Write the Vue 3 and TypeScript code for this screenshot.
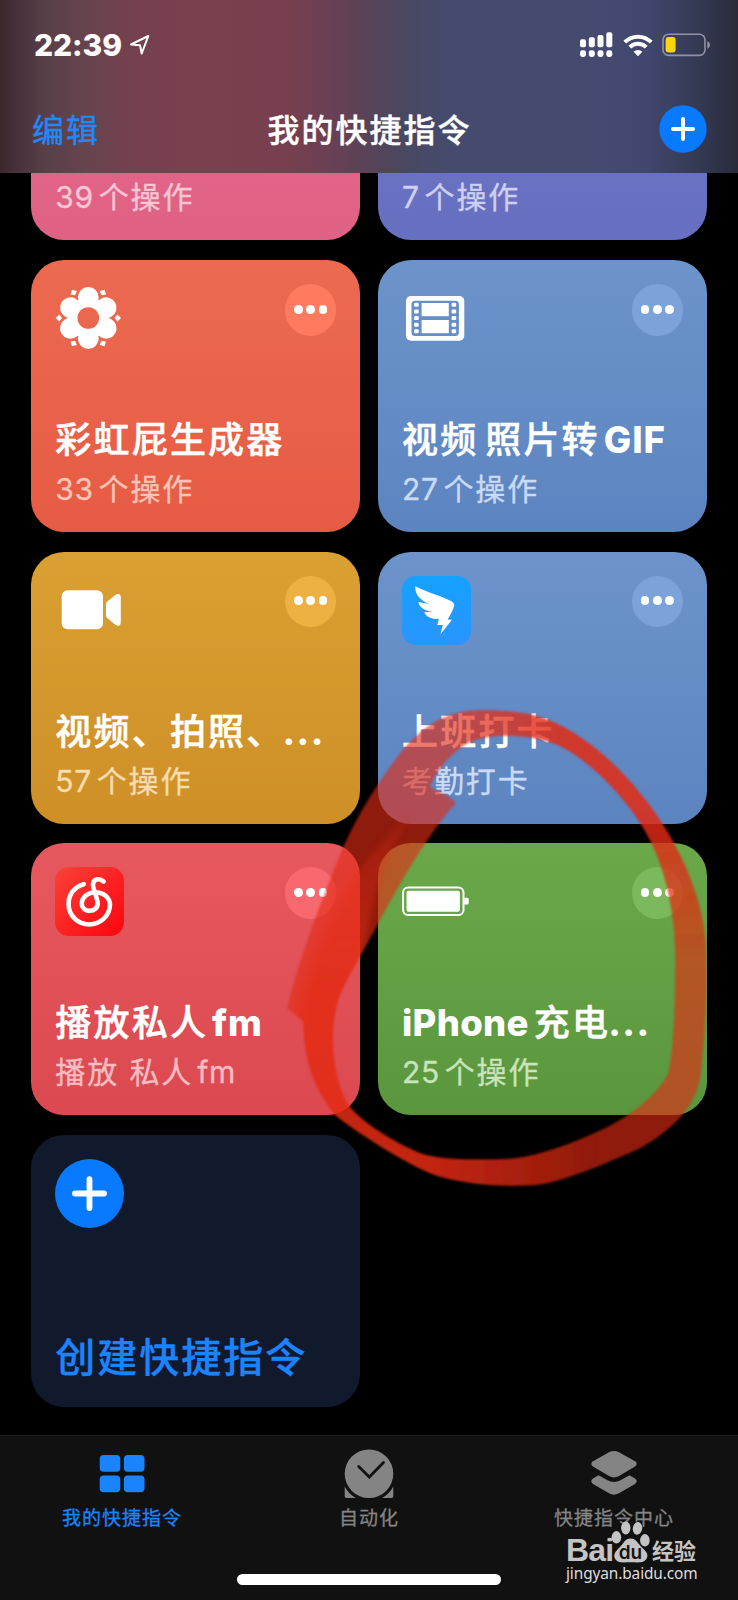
<script setup lang="ts">
type Icon = 'flower' | 'film' | 'camera' | 'wing' | 'music' | 'battery' | 'none'

interface Shortcut {
  id: string
  tone: string
  icon: Icon
  title: string
  sub: string
}

interface Run {
  text: string
  latin: boolean
}

const shortcuts: Shortcut[] = [
  { id: 'a', tone: 'pink', icon: 'none', title: '', sub: '39个操作' },
  { id: 'b', tone: 'violet', icon: 'none', title: '', sub: '7个操作' },
  { id: 'c', tone: 'coral', icon: 'flower', title: '彩虹屁生成器', sub: '33个操作' },
  { id: 'd', tone: 'blue', icon: 'film', title: '视频 照片转GIF', sub: '27个操作' },
  { id: 'e', tone: 'amber', icon: 'camera', title: '视频、拍照、...', sub: '57个操作' },
  { id: 'f', tone: 'blue', icon: 'wing', title: '上班打卡', sub: '考勤打卡' },
  { id: 'g', tone: 'red', icon: 'music', title: '播放私人fm', sub: '播放 私人fm' },
  { id: 'h', tone: 'green', icon: 'battery', title: 'iPhone充电...', sub: '25个操作' },
]

// Splits a label into Latin, dots and Chinese runs so each gets its own face and spacing.
function runs(label: string): Run[] {
  const parts = label.match(/[A-Za-z0-9]+|\.+|[^A-Za-z0-9.]+/g) ?? []
  return parts.map((text) => ({ text, latin: /^[A-Za-z0-9]/.test(text) }))
}

function runClass(run: Run): string {
  if (run.latin) return 'latin'
  return run.text.startsWith('.') ? 'dots' : 'han'
}

const petals = [0, 60, 120, 180, 240, 300]
</script>

<template>
  <div class="screen">
    <header class="header">
      <div class="status">
        <div class="clock">
          <span>22:39</span>
          <svg class="arrow" width="22" height="22" viewBox="0 0 22 22">
            <path d="M2 10.5 19.3 2 12.7 19.5 11 11.3Z" fill="none" stroke="#fff" stroke-width="2" stroke-linejoin="round" />
          </svg>
        </div>
        <div class="radios">
          <svg width="34" height="26" viewBox="0 0 34 26" fill="#fff">
            <rect x="0" y="7.3" width="6" height="8" rx="2" />
            <rect x="8.8" y="5.3" width="6" height="10" rx="2" />
            <rect x="17.5" y="3" width="6" height="12.3" rx="2" />
            <rect x="26.3" y="0.3" width="6" height="15" rx="2" />
            <rect v-for="x in [0, 8.8, 17.5, 26.3]" :key="x" :x="x" y="18.3" width="6" height="6.7" rx="2.4" />
          </svg>
          <svg width="30" height="24" viewBox="0 0 30 24" fill="none" stroke="#fff" stroke-width="4">
            <path d="M1.8 9.2A18.5 18.5 0 0 1 28.2 9.2" />
            <path d="M6.8 14.2A11.6 11.6 0 0 1 23.2 14.2" />
            <path d="M15 23.2 10.6 18.8A6.4 6.4 0 0 1 19.4 18.8Z" fill="#fff" stroke="none" />
          </svg>
          <svg class="power" width="49" height="24" viewBox="0 0 49 24">
            <rect x="1" y="1.2" width="42" height="21.2" rx="5.5" fill="none" stroke="#9193a5" stroke-width="1.6" />
            <rect x="3.6" y="4" width="10" height="15.6" rx="3" fill="#ffd60a" />
            <path d="M45.3 8V16Q48 14.5 48 12T45.3 8Z" fill="#9193a5" />
          </svg>
        </div>
      </div>
      <nav class="nav">
        <span class="edit">编辑</span>
        <span class="heading">我的快捷指令</span>
        <svg class="add" width="48" height="48" viewBox="0 0 48 48">
          <circle cx="24" cy="24" r="23.7" fill="#087aff" />
          <path d="M24 14V34M14 24H34" stroke="#fff" stroke-width="4" stroke-linecap="round" />
        </svg>
      </nav>
    </header>

    <main class="body">
      <div class="grid">
        <section v-for="s in shortcuts" :key="s.id" class="card" :class="s.tone">
          <div class="top">
            <svg v-if="s.icon === 'flower'" width="69" height="69" viewBox="0 0 69 69">
              <mask id="core">
                <rect width="69" height="69" fill="#fff" />
                <circle cx="33.3" cy="34" r="10.8" fill="#000" />
              </mask>
              <g fill="#fff" mask="url(#core)">
                <circle cx="33.3" cy="34" r="20.6" />
                <g v-for="a in petals" :key="a" :transform="`rotate(${a} 33.3 34)`">
                  <circle cx="33.3" cy="13.4" r="10.4" />
                </g>
              </g>
              <path
                v-for="a in petals"
                :key="`t${a}`"
                d="M0.6 34 4.2 30.4 7 34 4.2 37.6Z"
                fill="#fff"
                :transform="`rotate(${a} 33.3 34)`"
              />
            </svg>
            <svg v-else-if="s.icon === 'film'" width="69" height="69" viewBox="0.7 0 69 69" fill="#fff">
              <rect x="4.7" y="12" width="58.3" height="44.7" rx="5" />
              <rect x="10.2" y="16.7" width="47.4" height="35.3" rx="3.5" fill="#668fc8" />
              <rect x="20.3" y="19" width="27.2" height="13.2" />
              <rect x="20.3" y="36" width="27.2" height="13.2" />
              <g v-for="y in [18.8, 25.4, 32.1, 38.8, 45.3]" :key="y">
                <rect x="12.8" :y="y" width="4.6" height="4" rx="1.2" />
                <rect x="50.3" :y="y" width="4.6" height="4" rx="1.2" />
              </g>
            </svg>
            <svg v-else-if="s.icon === 'camera'" width="69" height="69" viewBox="0 0 69 69" fill="#fff">
              <rect x="6.7" y="14.3" width="41.3" height="39" rx="6" />
              <path d="M51 28.3Q51 26.7 52.2 25.6L60 19.2Q65.8 15.8 65.8 22V45.8Q65.8 52 60 48.6L52.2 42Q51 41 51 39.4Z" />
            </svg>
            <svg v-else-if="s.icon === 'wing'" width="69" height="69" viewBox="0 0 69 69">
              <defs>
                <linearGradient id="sky" x1="0" y1="0" x2="0" y2="1">
                  <stop offset="0" stop-color="#14a1ff" />
                  <stop offset="1" stop-color="#2b94ff" />
                </linearGradient>
              </defs>
              <rect width="69" height="69" rx="14" fill="url(#sky)" />
              <path
                d="M13.3 10.2C24 16 40 20 49.5 25.3Q53 27.5 52 30.5C50.5 35.5 48 39.5 45.5 43.4L50 43.8 38.3 58.6 40.8 49H35.2L37 42.8C31 43.5 24.5 41.5 22.2 36.2L30 36C22.5 34.5 17.5 31.5 16.3 26L27 28C18 24 12.8 18.5 13.3 10.2Z"
                fill="#fff"
              />
            </svg>
            <svg v-else-if="s.icon === 'music'" width="69" height="69" viewBox="0 0 69 69">
              <defs>
                <linearGradient id="disc" x1="0" y1="0" x2="1" y2="1">
                  <stop offset="0" stop-color="#fb4138" />
                  <stop offset="1" stop-color="#fb0510" />
                </linearGradient>
              </defs>
              <rect width="69" height="69" rx="14" fill="url(#disc)" />
              <path
                d="M28.8 17.2C19 19.8 13.4 28 13.6 37A20.7 20.2 0 0 0 55 37.5C54.6 30.5 49 25.6 41 25.2C32.5 25.2 26.6 30.5 26.8 36.8C27.2 46.3 43 46.3 42.7 36C42.5 31.5 38 22 38 17.8C38 11.8 44 10.6 48.6 14.6"
                fill="none"
                stroke="#fff"
                stroke-width="4.6"
                stroke-linecap="round"
              />
            </svg>
            <svg v-else-if="s.icon === 'battery'" width="69" height="69" viewBox="0.9 0.3 69 69" fill="#fff">
              <rect x="2" y="20.7" width="60.4" height="27.6" rx="5" fill="none" stroke="#fff" stroke-width="2" />
              <rect x="5.4" y="24" width="53.4" height="21" rx="2" />
              <path d="M63 31H66Q67.6 31 67.6 32.6V36.2Q67.6 37.8 66 37.8H63Z" />
            </svg>
            <div class="more"><i /><i /><i /></div>
          </div>
          <div class="label">
            <div class="title"><span v-for="(r, i) in runs(s.title)" :key="i" :class="runClass(r)">{{ r.text }}</span></div>
            <div class="sub"><span v-for="(r, i) in runs(s.sub)" :key="i" :class="runClass(r)">{{ r.text }}</span></div>
          </div>
        </section>
        <section class="card create">
          <svg width="69" height="69" viewBox="0 0 69 69">
            <circle cx="34.5" cy="34.5" r="34.5" fill="#087aff" />
            <path d="M34.5 20.2V49M20 34.5H49" stroke="#fff" stroke-width="5.8" stroke-linecap="round" />
          </svg>
          <div class="create-label">创建快捷指令</div>
        </section>
      </div>
    </main>

    <footer class="tabs">
      <div class="tab on">
        <svg width="50" height="50" viewBox="0 0 50 50" fill="#1a84ff">
          <rect x="2.7" y="6" width="20.6" height="16.8" rx="4" />
          <rect x="26.9" y="6" width="20.6" height="16.8" rx="4" />
          <rect x="2.7" y="26.4" width="20.6" height="16.8" rx="4" />
          <rect x="26.9" y="26.4" width="20.6" height="16.8" rx="4" />
        </svg>
        <span>我的快捷指令</span>
      </div>
      <div class="tab mid">
        <svg width="50" height="50" viewBox="0 0 50 50" fill="#848484">
          <path d="M0.7 37.5Q5 45.5 12 49H2.5Q0.7 49 0.7 47.2ZM49.3 37.5Q45 45.5 38 49H47.5Q49.3 49 49.3 47.2Z" />
          <circle cx="25" cy="24.7" r="24.3" />
          <path d="M14.7 17.5 25.3 28 39.5 13.5" fill="none" stroke="#111" stroke-width="2.8" stroke-linecap="round" />
        </svg>
        <span>自动化</span>
      </div>
      <div class="tab">
        <svg width="50" height="50" viewBox="0 0 50 50" fill="#848484">
          <path d="M4 12.2 20 3.3Q25 0.6 30 3.3L46 12.2Q49.5 14.8 46 17.6L30 27Q25 29.8 20 27L4 17.6Q0.5 14.8 4 12.2Z" />
          <path d="M9.5 26.3 18.5 31.3Q25 34.5 31.5 31.3L40.5 26.3 46 29.6Q49.5 32.3 46 35L30 44.3Q25 47 20 44.3L4 35Q0.5 32.3 4 29.6Z" />
        </svg>
        <span>快捷指令中心</span>
      </div>
      <div class="home" />
    </footer>

    <svg class="mark" width="458" height="510" viewBox="0 0 1374 1530">
      <defs>
        <path
          id="loop"
          clip-rule="evenodd"
          fill-rule="evenodd"
          d="M22 955C50 830 120 640 190 470C240 360 300 270 360 190C420 115 490 68 570 62C660 58 740 66 800 88C900 125 1010 220 1080 310C1190 440 1270 620 1277 760C1284 900 1275 1040 1262 1150C1250 1260 1160 1330 1080 1375C960 1430 830 1482 760 1486C640 1492 530 1480 450 1450C350 1405 220 1320 165 1275C100 1190 72 1110 70 995Z
             M540 175C585 140 650 136 700 138C780 140 840 160 900 205C1000 280 1100 400 1140 520C1175 620 1190 740 1185 850C1185 960 1180 1080 1165 1150C1130 1220 1040 1290 930 1335C840 1375 740 1408 660 1408C560 1410 460 1408 410 1385C320 1345 240 1290 205 1245C150 1150 150 1010 175 930C200 860 260 770 300 690C350 600 430 450 527 340C510 315 480 310 450 290C465 250 500 205 540 175Z"
        />
        <clipPath id="inside"><use href="#loop" clip-rule="evenodd" /></clipPath>
        <linearGradient id="fadeBottom" gradientUnits="userSpaceOnUse" x1="450" y1="0" x2="950" y2="0">
          <stop offset="0" stop-color="#e32a14" stop-opacity="0.62" />
          <stop offset="1" stop-color="#e32a14" stop-opacity="0" />
        </linearGradient>
        <linearGradient id="fadeLeft" gradientUnits="userSpaceOnUse" x1="0" y1="380" x2="0" y2="900">
          <stop offset="0" stop-color="#fff" stop-opacity="0.3" />
          <stop offset="1" stop-color="#fff" />
        </linearGradient>
        <linearGradient id="fadeRight" gradientUnits="userSpaceOnUse" x1="0" y1="350" x2="0" y2="800">
          <stop offset="0" stop-color="#e32a14" stop-opacity="0.62" />
          <stop offset="1" stop-color="#e32a14" stop-opacity="0" />
        </linearGradient>
        <linearGradient id="fadeTop" gradientUnits="userSpaceOnUse" x1="500" y1="0" x2="860" y2="0">
          <stop offset="0" stop-color="#fff" stop-opacity="0" />
          <stop offset="1" stop-color="#fff" />
        </linearGradient>
        <mask id="maskLeft" maskUnits="userSpaceOnUse" x="0" y="0" width="1374" height="1530">
          <rect width="1374" height="1530" fill="url(#fadeLeft)" />
        </mask>
        <mask id="maskTop" maskUnits="userSpaceOnUse" x="0" y="0" width="1374" height="1530">
          <rect width="1374" height="1530" fill="url(#fadeTop)" />
        </mask>
        <filter id="soft" filterUnits="userSpaceOnUse" x="-50" y="-50" width="1474" height="1630"><feGaussianBlur stdDeviation="9" /></filter>
        <filter id="edge" color-interpolation-filters="sRGB"><feGaussianBlur stdDeviation="2.5" /></filter>
      </defs>
      <g filter="url(#edge)">
        <use href="#loop" fill="#e32a14" fill-opacity="0.63" />
        <g clip-path="url(#inside)">
          <g mask="url(#maskLeft)">
            <path
              filter="url(#soft)"
              fill="url(#fadeBottom)"
              d="M400 360C300 460 210 560 165 660C120 770 80 860 55 980L20 1250 300 1530H960V1340H400L260 1150 230 900C230 860 255 760 280 640C310 520 350 450 400 360Z"
            />
          </g>
          <g mask="url(#maskTop)">
            <path
              filter="url(#soft)"
              fill="none"
              stroke="url(#fadeRight)"
              stroke-width="190"
              d="M480 100C640 80 800 90 900 170C1010 240 1150 420 1190 560C1230 660 1235 740 1235 820"
            />
          </g>
        </g>
      </g>
    </svg>

    <div class="watermark">
      <div class="brand">
        <span class="bai">Bai</span>
        <svg width="40" height="42" viewBox="0 0 40 42">
          <g fill="#c4c4c4">
            <ellipse cx="5.4" cy="16.3" rx="4.8" ry="6.2" />
            <ellipse cx="14.8" cy="7" rx="4.7" ry="6.4" />
            <ellipse cx="26.5" cy="7.4" rx="4.7" ry="6.4" transform="rotate(8 26.5 7.4)" />
            <ellipse cx="33.9" cy="19.3" rx="4.8" ry="6.2" />
            <path d="M19.5 17.5C25 17.5 27 22.5 31 26.5C36 31 38 34 35 38.5C32 42.5 26 41.3 19.5 41.3S7.5 42.5 4.5 38.5C1.5 34 4 31 8.5 26.5C12.5 22.5 14 17.5 19.5 17.5Z" />
          </g>
          <text x="19.5" y="37.6" text-anchor="middle" font-family="Inter, sans-serif" font-weight="600" font-size="19" fill="#141414">du</text>
        </svg>
        <span class="jing">经验</span>
      </div>
      <div class="site">jingyan.baidu.com</div>
    </div>
  </div>
</template>

<style>
html,
body {
  background: #000;
}
</style>

<style scoped>
.screen {
  position: relative;
  width: 738px;
  height: 1600px;
  overflow: hidden;
  display: flex;
  flex-direction: column;
  background: #000;
  color: #fff;
  font-family: Inter, 'Noto Sans CJK SC', sans-serif;
}
svg {
  display: block;
  flex: none;
}
.header {
  flex: none;
  height: 173px;
  box-sizing: border-box;
  padding: 26px 31px 0 32px;
  background: linear-gradient(90deg, #3b282d 0, #46303a 16px, #583f48 45px, #66444e 85px, #75404f 135px, #7b404e 200px, #773f4e 290px, #684055 335px, #574358 370px, #484962 410px, #454b6e 450px, #454b70 600px, #40466c 650px, #343953 700px, #292b3b 738px);
}
.status {
  height: 37px;
  padding-left: 2px;
  margin-right: -4px;
  display: flex;
  justify-content: space-between;
  align-items: center;
}
.clock {
  display: flex;
  align-items: center;
  gap: 7px;
  font-weight: 800;
  font-size: 30px;
  letter-spacing: -0.1px;
}
.radios {
  display: flex;
  align-items: center;
  gap: 9px;
}
.nav {
  margin-top: 42px;
  height: 48px;
  display: grid;
  grid-template-columns: 1fr auto 1fr;
  align-items: center;
  font-size: 32px;
  letter-spacing: 2px;
}
.nav span {
  margin-top: -3px;
}
.edit {
  color: #2088ff;
  -webkit-text-stroke: 0.4px currentColor;
}
.heading {
  font-weight: 500;
  -webkit-text-stroke: 0.4px currentColor;
}
.add {
  justify-self: end;
}
.body {
  flex: none;
  height: 1262px;
  overflow: hidden;
}
.grid {
  display: grid;
  grid-template-columns: 328.7px 328.7px;
  grid-auto-rows: 272px;
  gap: 19.55px 18px;
  margin: -204.55px 0 0 31.3px;
}
.card {
  box-sizing: border-box;
  border-radius: 33px;
  padding: 24px 23.5px 19px 24px;
  display: flex;
  flex-direction: column;
  justify-content: space-between;
}
.top {
  display: flex;
  justify-content: space-between;
}
.more {
  margin-left: auto;
  width: 51.5px;
  height: 51.5px;
  border-radius: 50%;
  display: flex;
  align-items: center;
  justify-content: center;
  gap: 3.7px;
}
.more i {
  width: 8.7px;
  height: 8.7px;
  margin-top: -1px;
  border-radius: 50%;
  background: #fff;
}
.pink { background: linear-gradient(#e66f91, #df6184); }
.pink .sub { color: #f8c5d4; }
.violet { background: linear-gradient(#7379c6, #666fc0); }
.violet .sub { color: #ced0f1; }
.coral { background: linear-gradient(#ec6a50, #e65b43); }
.coral .sub { color: #f9c3b8; }
.coral .more { background: #ff7a5f; }
.blue { background: linear-gradient(#6c94cb, #5c84c0); }
.blue .sub { color: #cbdaf4; }
.blue .more { background: #7ba3da; }
.amber { background: linear-gradient(#d9a033, #ce8f27); }
.amber .sub { color: #f7dcae; }
.amber .more { background: #edb042; }
.red { background: linear-gradient(#e6585f, #dc4950); }
.red .sub { color: #f7bcc2; }
.red .more { background: #f8686f; }
.green { background: linear-gradient(#6ba84a, #5a963d); }
.green .sub { color: #c9e3ba; }
.green .more { background: #7bb95c; }
.title {
  height: 50px;
  line-height: 50px;
  font-size: 36px;
  font-weight: 500;
  white-space: nowrap;
}
.title .han {
  letter-spacing: 2.2px;
  word-spacing: -5px;
  -webkit-text-stroke: 0.5px currentColor;
}
.title .latin {
  font-weight: 800;
  font-size: 36.5px;
  letter-spacing: 0.3px;
}
.title .han + .latin {
  letter-spacing: 0.9px;
}
.title .dots {
  margin-left: -2px;
  font-weight: 800;
  letter-spacing: 1.4px;
}
.sub {
  height: 48px;
  line-height: 48px;
  font-size: 30px;
  white-space: nowrap;
  -webkit-text-stroke: 0.35px currentColor;
}
.sub .han {
  letter-spacing: 1.9px;
}
.sub .latin {
  letter-spacing: 0.6px;
}
.latin + .han {
  margin-left: 5px;
}
.han + .latin {
  margin-left: 4px;
}
.create {
  background: #111a2c;
  padding-bottom: 20px;
}
.create-label {
  height: 58px;
  line-height: 58px;
  font-size: 40px;
  font-weight: 500;
  letter-spacing: 2px;
  color: #1a84ff;
  -webkit-text-stroke: 0.3px currentColor;
}
.tabs {
  position: relative;
  flex: 1;
  display: flex;
  justify-content: space-between;
  padding: 13px 54px 0 52px;
  border-top: 1px solid #1c1c1d;
  background: #111;
}
.tab {
  width: 140px;
  display: flex;
  flex-direction: column;
  align-items: center;
  font-size: 19px;
  line-height: 28px;
  letter-spacing: 1px;
  color: #848484;
  white-space: nowrap;
  -webkit-text-stroke: 0.3px currentColor;
}
.tab.mid {
  padding-left: 2px;
}
.tab span {
  margin-top: 6px;
}
.tab.on {
  color: #1a84ff;
}
.home {
  position: absolute;
  left: 237px;
  bottom: 15px;
  width: 264px;
  height: 11px;
  border-radius: 6px;
  background: #fff;
}
.mark {
  position: absolute;
  left: 280px;
  top: 690px;
}
.watermark {
  position: absolute;
  left: 566px;
  top: 1521px;
  color: #c4c4c4;
}
.brand {
  display: flex;
  align-items: flex-end;
  height: 42px;
}
.bai {
  width: 45px;
  font: 700 32px/25px 'Liberation Sans', sans-serif;
  letter-spacing: -0.8px;
}
.jing {
  margin-left: 1px;
  font-size: 22px;
  line-height: 24px;
  font-weight: 700;
}
.site {
  margin-top: 1px;
  font: 15.4px/20px 'Noto Sans', sans-serif;
  letter-spacing: -0.1px;
  color: #dedede;
}
</style>
